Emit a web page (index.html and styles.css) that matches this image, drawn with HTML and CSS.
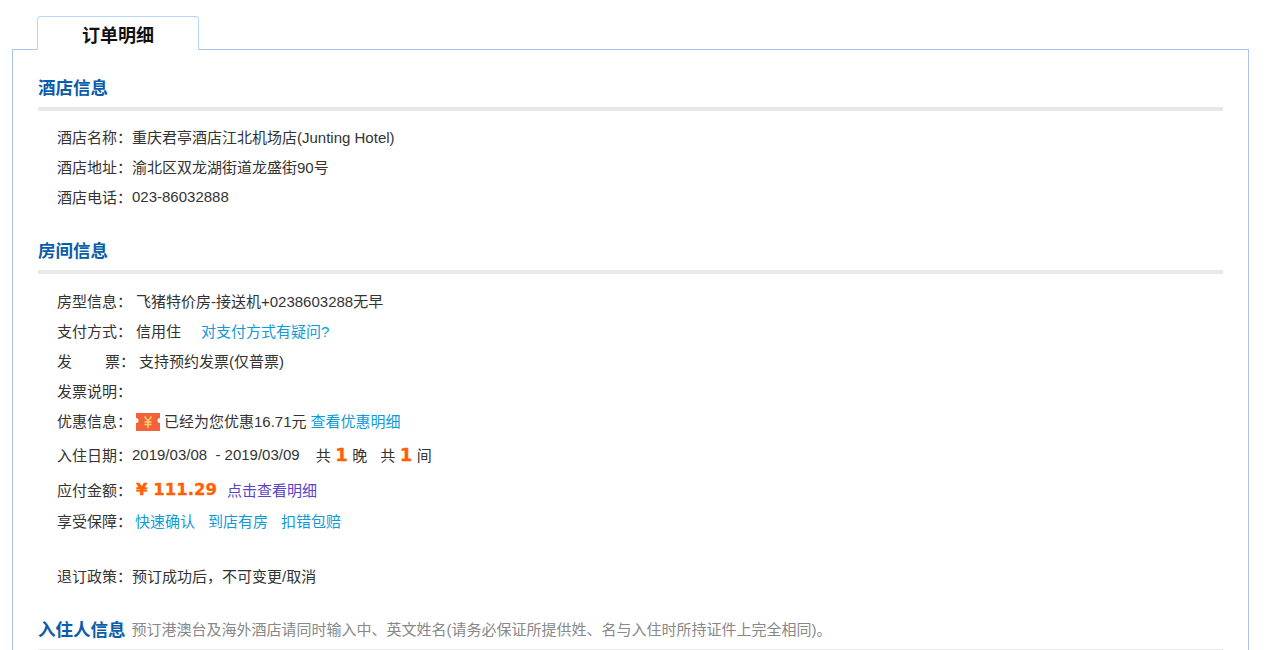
FILE: index.html
```html
<!DOCTYPE html>
<html lang="zh">
<head>
<meta charset="utf-8">
<title>订单明细</title>
<link rel="stylesheet" href="styles.css">
</head>
<body>
<div class="page">
  <div class="tab">订单明细</div>
  <div class="panel">
    <h2 class="heading">酒店信息</h2>
    <div class="rows">
      <div class="row"><span class="label">酒店名称：</span><span>重庆君亭酒店江北机场店(Junting Hotel)</span></div>
      <div class="row"><span class="label">酒店地址：</span><span>渝北区双龙湖街道龙盛街90号</span></div>
      <div class="row"><span class="label">酒店电话：</span><span>023-86032888</span></div>
    </div>
    <h2 class="heading second">房间信息</h2>
    <div class="rows room">
      <div class="row"><span class="label wide">房型信息：</span><span>飞猪特价房-接送机+0238603288无早</span></div>
      <div class="row"><span class="label wide">支付方式：</span><span>信用住</span><a class="link ask">对支付方式有疑问?</a></div>
      <div class="row"><span class="label invoice"><span>发</span><span>票：</span></span><span>支持预约发票(仅普票)</span></div>
      <div class="row"><span class="label">发票说明：</span></div>
      <div class="row"><span class="label wide">优惠信息：</span>
        <svg class="coupon" width="24" height="18" viewBox="0 0 24 18">
          <path d="M0 0H24V5A2.500 2.500 0 0 0 24 10V18H0V10A2.500 2.500 0 0 0 0 5Z" fill="#f4623a"/>
          <path d="M8.500 3.500L12 8L15.500 3.500M8.500 9H15.500M8.500 11.500H15.500M12 8V15" fill="none" stroke="#fbd36b" stroke-width="1.500"/>
        </svg>
        <span class="saved">已经为您优惠16.71元</span><a class="link detail">查看优惠明细</a></div>
      <div class="row date"><span class="label">入住日期：</span><span class="pre">2019/03/08  - 2019/03/09</span><span class="count">共<b class="num">1</b>晚</span><span class="count next">共<b class="num">1</b>间</span></div>
      <div class="row amount"><span class="label wide">应付金额：</span><b class="price">¥ 111.29</b><a class="view">点击查看明细</a></div>
      <div class="row guarantee"><span class="label wide">享受保障：</span><a class="link">快速确认</a><a class="link">到店有房</a><a class="link">扣错包赔</a></div>
      <div class="row policy"><span class="label">退订政策：</span><span>预订成功后，不可变更/取消</span></div>
    </div>
    <div class="guest"><h2 class="guest-title">入住人信息</h2><span class="guest-note">预订港澳台及海外酒店请同时输入中、英文姓名(请务必保证所提供姓、名与入住时所持证件上完全相同)。</span></div>
  </div>
</div>
</body>
</html>
```
FILE: styles.css
```css
* { box-sizing: border-box; }
html, body { margin: 0; height: 650px; overflow: hidden; background: #fff; }
body {
  font-family: "Liberation Sans", "Noto Sans CJK SC", sans-serif;
  font-size: 15px;
  color: #333;
}
.page { padding: 16px 0 0 12px; width: 1249px; }
.tab {
  width: 162px;
  height: 34px;
  margin: 0 0 -1px 25px;
  border: 1px solid #b5d6fb;
  border-bottom: 0;
  border-radius: 4px 4px 0 0;
  background: #fff;
  color: #111;
  font-size: 18px;
  font-weight: bold;
  line-height: 38px;
  text-align: center;
  position: relative;
}
.panel {
  border: 1px solid #a9c6ea;
  border-bottom: 0;
  height: 620px;
  padding: 0 25px;
}
.heading {
  margin: 24px 0 0;
  height: 37px;
  border-bottom: 4px solid #e8e8e8;
  color: #0b5cab;
  font-size: 17.5px;
  line-height: 28px;
  font-weight: bold;
}
.heading.second { margin-top: 26px; }
.rows { padding: 10px 0 0 19px; }
.rows.room { padding-top: 11px; }
.row { display: flex; align-items: center; height: 30px; white-space: pre; }
.label { width: 75px; flex: none; }
.label.wide { width: 79px; }
.label.invoice { width: 82px; display: flex; justify-content: space-between; padding-right: 4px; }
.link { color: #0f9ad8; }
.ask { margin-left: 20px; }
.coupon { margin: 4px 4px 0 0; flex: none; }
.detail { margin-left: 4px; }
.pre { white-space: pre; }
.date { height: 36px; margin-top: 1px; }
.count { margin-left: 16px; display: flex; align-items: center; }
.count.next { margin-left: 13px; }
.num { color: #ff6000; font-family: "DejaVu Sans", sans-serif; font-size: 18px; margin: 0 4.5px; -webkit-text-stroke: .3px #ff6000; }
.amount { height: 33px; padding-top: 1px; }
.price { color: #ff6000; font-family: "DejaVu Sans", sans-serif; font-size: 16.5px; width: 91px; -webkit-text-stroke: .3px #ff6000; }
.view { color: #5a45c8; }
.guarantee .label.wide { width: 78px; }
.guarantee .link { margin-right: 13px; }
.guarantee { margin-bottom: 25px; }
.guest {
  margin-top: 25px;
  height: 35px;
  padding-bottom: 7px;
  border-bottom: 1px solid #e8e8e8;
  display: flex;
  align-items: center;
}
.guest-title { margin: 0 6px 0 0; color: #0b5cab; font-size: 17.5px; font-weight: bold; }
.guest-note { color: #888; }
```
